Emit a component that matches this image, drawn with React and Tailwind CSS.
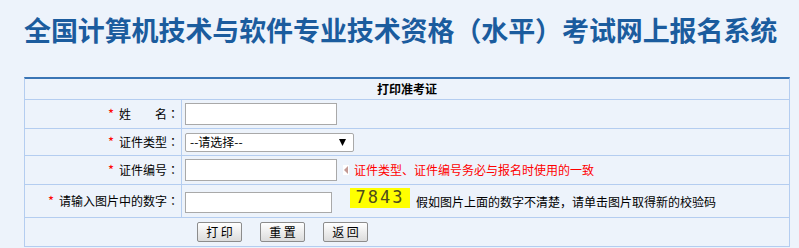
import React from "react";

const font = "font-['Noto_Sans_CJK_SC','Noto_Sans',sans-serif]";

const Star = () => <span className="text-[#ff0000] text-[13px] mr-[5px]">*</span>;

// centred full-width colon, as in the old SimSun page
const Colon = () => <span className="font-['Noto_Sans_CJK_TC',sans-serif]">：</span>;

const Row = ({ label, h, children, last }) => (
    <div className={`flex ${h} ${last ? "" : "border-b border-[#b4cdf0]"}`}>
        <div className="w-[157px] shrink-0 border-r border-[#b4cdf0] flex items-center justify-end pr-[2px]">
            {label}
        </div>
        <div className="flex-1 flex items-center pl-[3px]">{children}</div>
    </div>
);

const Btn = ({ children }) => (
    <button className="w-[45px] h-[20px] border border-[#8c8c8c] rounded-[2px] bg-gradient-to-b from-white to-[#dcdcdc] text-[12px] leading-none text-black">
        {children}
    </button>
);

const App = () => {
    return (
        <div className={`w-[799px] h-[248px] bg-[#edf3fb] overflow-hidden ${font}`}>
            <div className="pt-[12px] pl-[24px] h-[77px]">
                <h1 className="text-[27px] leading-[36px] font-bold text-[#1b5c9e] tracking-[-0.1px] whitespace-nowrap">
                    全国计算机技术与软件专业技术资格（水平）考试网上报名系统
                </h1>
            </div>

            <div className="ml-[24px] w-[766px] border-x border-b border-[#b4cdf0] border-t-2 border-t-[#3a75b5] text-[12px] text-black">
                <div className="h-[21px] border-b border-[#b4cdf0] flex items-center justify-center font-bold">
                    打印准考证
                </div>

                <Row h="h-[29px]" label={<span><Star />姓<span className="inline-block w-[24px]"></span>名<Colon /></span>}>
                    <input className="w-[152px] h-[22px] border border-[#a9a9a9] bg-white outline-none" />
                </Row>

                <Row h="h-[27px]" label={<span><Star />证件类型<Colon /></span>}>
                    <div className="relative w-[169px] h-[19px]">
                        <select className="w-full h-full appearance-none border border-[#a9a9a9] rounded-[2px] bg-white pl-[4px] text-[12px] leading-none outline-none">
                            <option>--请选择--</option>
                        </select>
                        <svg className="absolute right-[8px] top-[6px]" width="7" height="7" viewBox="0 0 7 7">
                            <path d="M0 0 L7 0 L3.5 7 Z" fill="#000" />
                        </svg>
                    </div>
                </Row>

                <Row h="h-[29px]" label={<span><Star />证件编号<Colon /></span>}>
                    <input className="w-[152px] h-[22px] border border-[#a9a9a9] bg-white outline-none" />
                    <svg className="ml-[6px]" width="6" height="10" viewBox="0 0 6 10">
                        <rect width="6" height="10" fill="#ffffff" />
                        <path d="M5 1 L1 5 L5 9 Z" fill="#c49a94" />
                    </svg>
                    <span className="ml-[5px] text-[#ff0000]">证件类型、证件编号务必与报名时使用的一致</span>
                </Row>

                <Row h="h-[33px]" label={<span><Star />请输入图片中的数字<Colon /></span>}>
                    <input className="w-[147px] h-[21px] border border-[#a9a9a9] bg-white outline-none mt-[3px]" />
                    <div className="ml-[18px] w-[60px] h-[20px] bg-[#ffff00] flex items-center justify-center font-['DejaVu_Sans_Mono',monospace] text-[17px] tracking-[2px] text-[#4f4d1c] -mt-[6px]">
                        7843
                    </div>
                    <span className="ml-[6px] mt-[2px]">假如图片上面的数字不清楚，请单击图片取得新的校验码</span>
                </Row>

                <div className="h-[28px] flex items-center pl-[172px] gap-[18px]">
                    <Btn>打 印</Btn>
                    <Btn>重 置</Btn>
                    <Btn>返 回</Btn>
                </div>
            </div>
        </div>
    );
};

export default App;
